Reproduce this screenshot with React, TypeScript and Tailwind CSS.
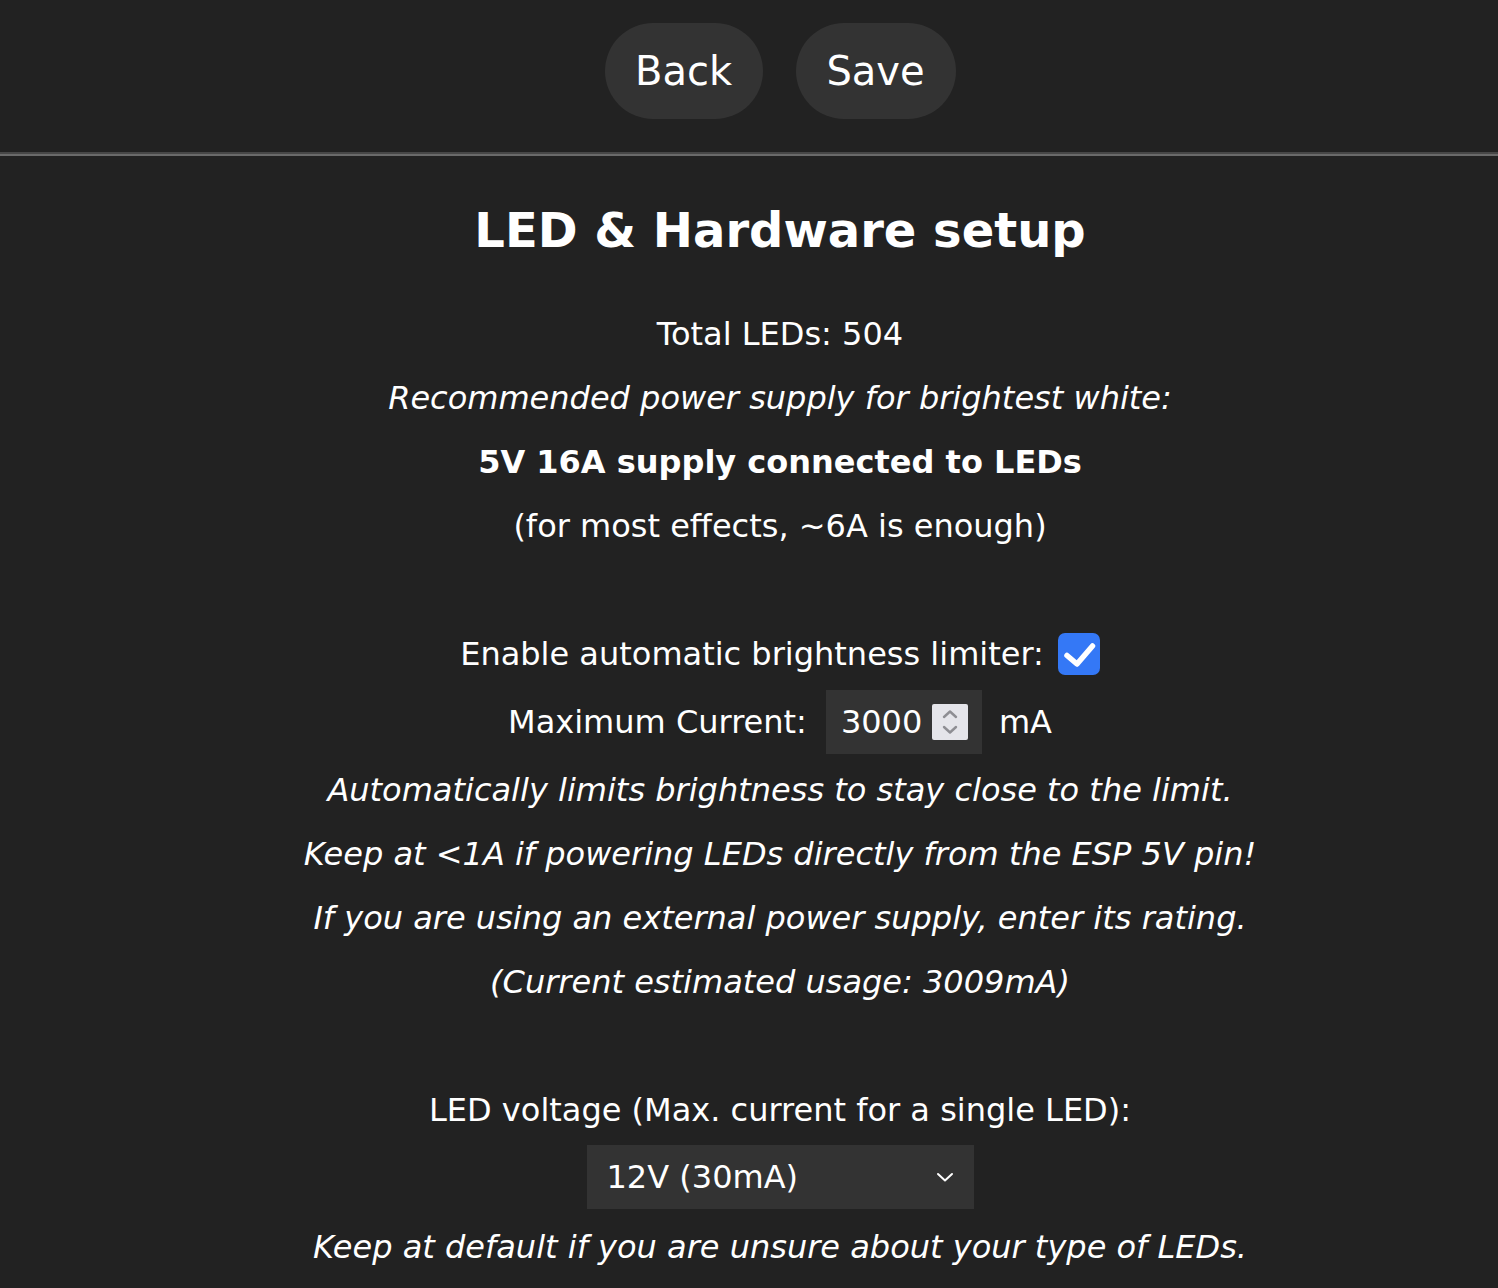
import React from "react";

function Line({ children, className = "" }: { children: React.ReactNode; className?: string }) {
  return <div className={`h-[64px] leading-[64px] whitespace-nowrap ${className}`}>{children}</div>;
}

export default function App() {
  return (
    <div className="min-h-[1288px] bg-[#222222] text-white font-['DejaVu_Sans','Verdana',sans-serif] text-center text-[32px]">
      <div className="flex justify-center gap-[33px] pt-[23px] pl-[62px]">
        <button className="w-[158px] h-[96px] rounded-[48px] bg-[#333333] text-[40px] text-white flex items-center justify-center">
          Back
        </button>
        <button className="w-[160px] h-[96px] rounded-[48px] bg-[#333333] text-[40px] text-white flex items-center justify-center">
          Save
        </button>
      </div>
      <div className="mt-[33px] h-[4px] flex flex-col">
        <div className="h-[2px] bg-[#474747]" />
        <div className="h-[2px] bg-[#6a6a6a]" />
      </div>
      <div className="pl-[62px]">
        <h2 className="mt-[26px] mb-[24px] h-[96px] leading-[96px] text-[48px] font-bold whitespace-nowrap">LED &amp; Hardware setup</h2>
        <Line>Total LEDs: 504</Line>
        <Line className="italic">Recommended power supply for brightest white:</Line>
        <Line className="font-bold">5V 16A supply connected to LEDs</Line>
        <Line>(for most effects, ~6A is enough)</Line>
        <Line>{"\u00a0"}</Line>
        <div className="h-[64px] flex items-center justify-center">
          <span>Enable automatic brightness limiter:</span>
          <span className="ml-[14px] w-[42px] h-[42px] rounded-[7px] bg-[#3478f6] flex items-center justify-center">
            <svg width="42" height="42" viewBox="0 0 42 42">
              <path d="M9 22.5 L19 31 L34.5 13" fill="none" stroke="#ffffff" strokeWidth="5.5" strokeLinecap="round" strokeLinejoin="round" />
            </svg>
          </span>
        </div>
        <div className="h-[72px] flex items-center justify-center">
          <span>Maximum Current:</span>
          <span className="ml-[19px] w-[156px] h-[64px] bg-[#333333] flex items-center pl-[15px] pr-[14px]">
            <span className="flex-1 text-left">3000</span>
            <span className="w-[36px] h-[36px] bg-[#e5e5ea] rounded-[2px] flex items-center justify-center">
              <svg width="36" height="36" viewBox="0 0 36 36">
                <path d="M12 13 L18 7.5 L24 13" fill="none" stroke="#8e8e93" strokeWidth="2.4" strokeLinecap="round" strokeLinejoin="round" />
                <path d="M12 23 L18 28.5 L24 23" fill="none" stroke="#8e8e93" strokeWidth="2.4" strokeLinecap="round" strokeLinejoin="round" />
              </svg>
            </span>
          </span>
          <span className="ml-[17px]">mA</span>
        </div>
        <Line className="italic">Automatically limits brightness to stay close to the limit.</Line>
        <Line className="italic">Keep at &lt;1A if powering LEDs directly from the ESP 5V pin!</Line>
        <Line className="italic">If you are using an external power supply, enter its rating.</Line>
        <Line className="italic">(Current estimated usage: 3009mA)</Line>
        <Line>{"\u00a0"}</Line>
        <Line>LED voltage (Max. current for a single LED):</Line>
        <div className="pt-[3px] pb-[6px] flex justify-center">
          <div className="w-[387px] h-[64px] bg-[#333333] flex items-center pl-[20px] pr-[20px]">
            <span className="flex-1 text-left">12V (30mA)</span>
            <svg width="18" height="12" viewBox="0 0 18 12">
              <path d="M2 3 L9 9.5 L16 3" fill="none" stroke="#ffffff" strokeWidth="2" strokeLinecap="round" strokeLinejoin="round" />
            </svg>
          </div>
        </div>
        <Line className="italic">Keep at default if you are unsure about your type of LEDs.</Line>
      </div>
    </div>
  );
}
